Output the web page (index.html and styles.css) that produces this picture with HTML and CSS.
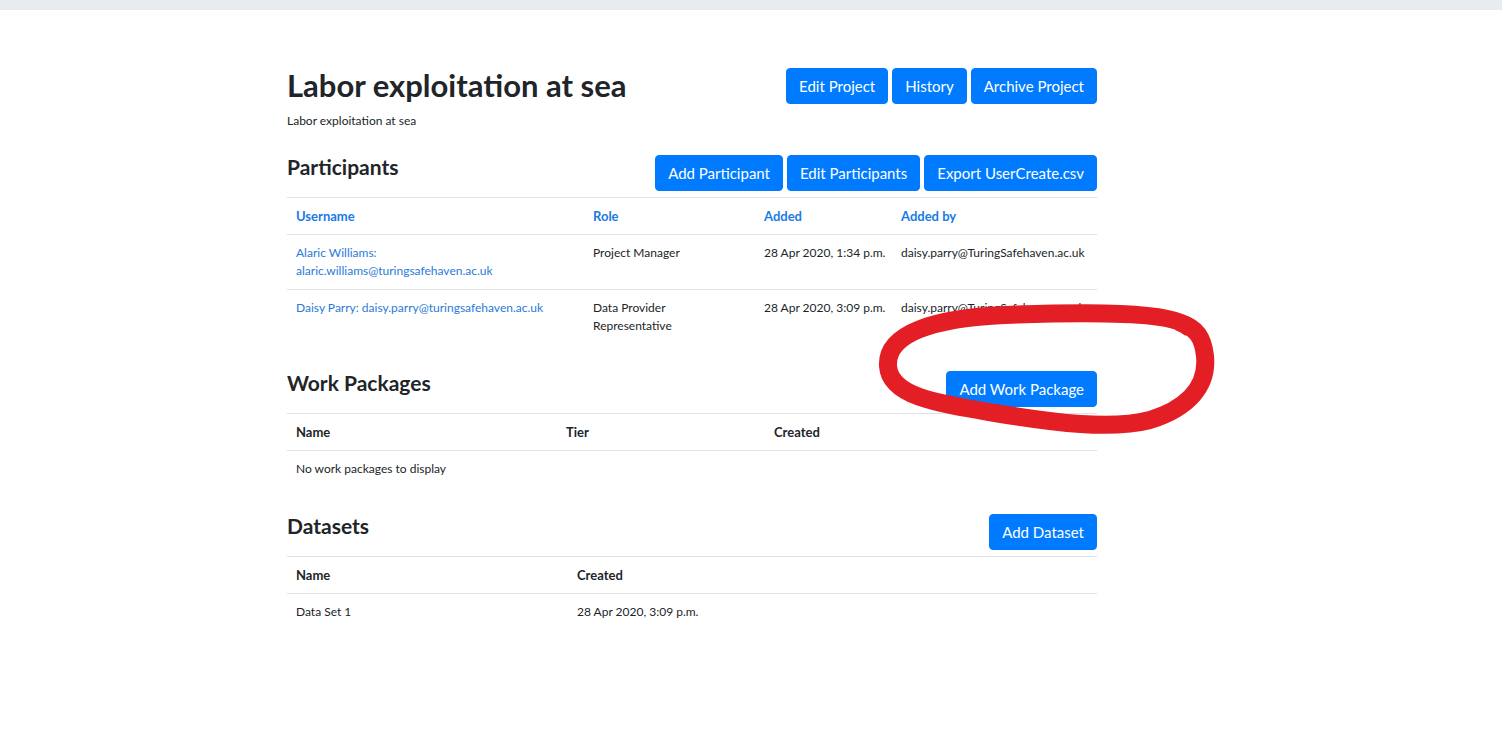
FILE: index.html
```html
<!DOCTYPE html>
<html lang="en">
<head>
<meta charset="utf-8">
<title>Labor exploitation at sea</title>
<link rel="stylesheet" href="styles.css">
</head>
<body>
<div class="topbar"></div>
<main class="content">
  <div class="head-row">
    <h2 class="title">Labor exploitation at sea</h2>
    <div class="btns">
      <a class="btn" href="#">Edit Project</a>
      <a class="btn" href="#">History</a>
      <a class="btn" href="#">Archive Project</a>
    </div>
  </div>
  <p class="subtitle">Labor exploitation at sea</p>

  <section class="section section-first">
    <div class="sec-head">
      <h4 class="sec-title">Participants</h4>
      <div class="btns">
        <a class="btn" href="#">Add Participant</a>
        <a class="btn" href="#">Edit Participants</a>
        <a class="btn" href="#">Export UserCreate.csv</a>
      </div>
    </div>
    <table class="tbl">
      <colgroup><col class="pc1"><col class="pc2"><col class="pc3"><col class="pc4"></colgroup>
      <thead>
        <tr><th><a class="th-link" href="#">Username</a></th><th><a class="th-link" href="#">Role</a></th><th><a class="th-link" href="#">Added</a></th><th><a class="th-link" href="#">Added by</a></th></tr>
      </thead>
      <tbody>
        <tr><td><a class="lnk" href="#">Alaric Williams: alaric.williams@turingsafehaven.ac.uk</a></td><td>Project Manager</td><td class="nowrap">28 Apr 2020, 1:34 p.m.</td><td class="nowrap">daisy.parry@TuringSafehaven.ac.uk</td></tr>
        <tr><td><a class="lnk" href="#">Daisy Parry: daisy.parry@turingsafehaven.ac.uk</a></td><td>Data Provider Representative</td><td class="nowrap">28 Apr 2020, 3:09 p.m.</td><td class="nowrap">daisy.parry@TuringSafehaven.ac.uk</td></tr>
      </tbody>
    </table>
  </section>

  <section class="section">
    <div class="sec-head">
      <h4 class="sec-title">Work Packages</h4>
      <div class="btns">
        <a class="btn" href="#">Add Work Package</a>
      </div>
    </div>
    <table class="tbl">
      <colgroup><col class="wc1"><col class="wc2"><col class="wc3"></colgroup>
      <thead>
        <tr><th>Name</th><th>Tier</th><th>Created</th></tr>
      </thead>
      <tbody>
        <tr><td colspan="3">No work packages to display</td></tr>
      </tbody>
    </table>
  </section>

  <section class="section">
    <div class="sec-head">
      <h4 class="sec-title">Datasets</h4>
      <div class="btns">
        <a class="btn" href="#">Add Dataset</a>
      </div>
    </div>
    <table class="tbl">
      <colgroup><col class="dc1"><col class="dc2"></colgroup>
      <thead>
        <tr><th>Name</th><th>Created</th></tr>
      </thead>
      <tbody>
        <tr><td>Data Set 1</td><td>28 Apr 2020, 3:09 p.m.</td></tr>
      </tbody>
    </table>
  </section>
</main>
<svg class="scribble" width="380" height="160" viewBox="860 290 380 160" aria-hidden="true">
  <path d="M1188 327 C1172 311 1085 312 1005 315 C935 318 886 333 888 366 C890 396 935 403 995 413 C1055 423 1112 430 1150 420 C1188 408 1208 386 1205 356 C1203 337 1196 328 1181 323" fill="none" stroke="#e31e24" stroke-width="18" stroke-linecap="round" stroke-linejoin="round"/>
</svg>
</body>
</html>
```

FILE: styles.css
```css
* { box-sizing: border-box; }
html, body { margin: 0; padding: 0; background: #fff; }
body {
  font-family: Lato, "Open Sans", "Liberation Sans", sans-serif;
  color: #212529;
  position: relative;
  min-height: 732px;
}
.topbar { height: 10px; background: #e9ecef; }
.content {
  width: 810px;
  margin-left: 287px;
  padding-top: 58px;
}
.head-row {
  display: flex;
  justify-content: space-between;
  align-items: center;
}
.title {
  margin: 0;
  font-size: 31px;
  font-weight: 700;
  line-height: 36px;
  position: relative;
  top: -1px;
}
.btns { display: flex; gap: 4px; }
.btn {
  display: inline-block;
  background: #007bff;
  color: #fff;
  border: 1px solid #007bff;
  border-radius: 4px;
  padding: 6px 12px;
  font-size: 15px;
  line-height: 22px;
  text-decoration: none;
  white-space: nowrap;
}
.subtitle {
  margin: 8px 0 0;
  font-size: 12px;
  line-height: 18px;
}
.section { margin-top: 27px; }
.section-first { margin-top: 25px; }
.sec-head {
  display: flex;
  justify-content: space-between;
  align-items: center;
  margin-bottom: 6px;
}
.sec-title {
  margin: 0;
  font-size: 21px;
  font-weight: 700;
  line-height: 24px;
  position: relative;
  top: -6px;
}
.tbl {
  width: 100%;
  border-collapse: collapse;
  table-layout: fixed;
  font-size: 12px;
  line-height: 18px;
}
.tbl th, .tbl td {
  text-align: left;
  vertical-align: top;
  padding: 9px 9px;
  border-top: 1px solid #dee2e6;
}
.tbl th { font-weight: 700; font-size: 13px; border-bottom: 1px solid #dee2e6; }
.tbl tbody tr:first-child td { border-top: 0; }
.tbl td.nowrap { white-space: nowrap; }
.th-link { color: #1a7ae6; text-decoration: none; }
.lnk { color: #2a7ad8; text-decoration: none; }
.pc1 { width: 297px; }
.pc2 { width: 171px; }
.pc3 { width: 137px; }
.pc4 { width: 205px; }
.wc1 { width: 270px; }
.wc2 { width: 208px; }
.wc3 { width: 332px; }
.dc1 { width: 281px; }
.dc2 { width: 529px; }
.scribble {
  position: absolute;
  left: 860px;
  top: 290px;
  pointer-events: none;
}
```
